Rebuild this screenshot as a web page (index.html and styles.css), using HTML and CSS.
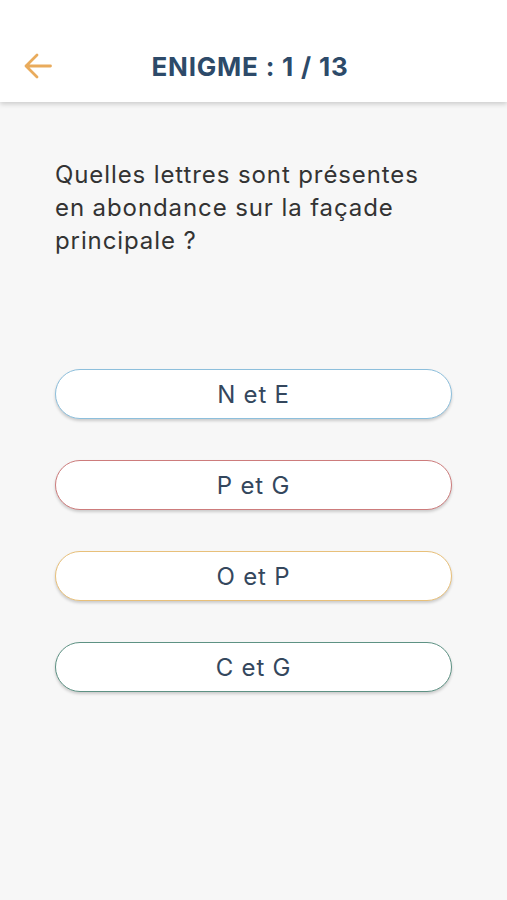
FILE: index.html
```html
<!DOCTYPE html>
<html lang="fr">
<head>
	<meta charset="UTF-8">
	<title>Enigme</title>
	<link rel="stylesheet" href="styles.css">
</head>
<body>
	<div class="header">
		<a class="back" href="javascript:;">
			<svg width="28" height="26" viewBox="0 0 28 26">
				<path d="M26.5 13H2M13 2L2 13l11 11" fill="none" stroke="#e9ab5c" stroke-width="2.8" stroke-linecap="round" stroke-linejoin="round"/>
			</svg>
		</a>
		<h1>ENIGME : 1 / 13</h1>
	</div>
	<div class="main">
		<p class="question">Quelles lettres sont présentes en abondance sur la façade principale ?</p>
		<ul class="answers">
			<li class="blue">N et E</li>
			<li class="red">P et G</li>
			<li class="orange">O et P</li>
			<li class="green">C et G</li>
		</ul>
	</div>
</body>
</html>
```

FILE: styles.css
```css
body,
h1,
p,
ul {
	margin: 0;
	padding: 0;
}

li {
	list-style: none;
}

body {
	background: #f7f7f7;
	font-family: Inter, "Liberation Sans", sans-serif;
	height: 900px;
}

.header {
	height: 72px;
	padding-top: 30px;
	background: #fff;
	box-shadow: 0 2px 5px rgba(0, 0, 0, 0.18);
	display: flex;
	align-items: center;
}

.header .back {
	display: block;
	width: 28px;
	height: 26px;
	margin-left: 24px;
}

.header h1 {
	flex: 1;
	text-align: center;
	font-size: 26px;
	font-weight: 700;
	color: #2d4a69;
	margin-right: 51px;
	margin-left: -8px;
	letter-spacing: 0.8px;
}

.main {
	padding: 56px 55px 0 55px;
}

.question {
	font-size: 24px;
	line-height: 33px;
	letter-spacing: 0.9px;
	color: #333;
	width: 380px;
}

.answers {
	margin-top: 112px;
	display: flex;
	flex-direction: column;
	gap: 41px;
}

.answers li {
	height: 48px;
	width: 395px;
	background: #fff;
	border: 1.5px solid #ccc;
	border-radius: 26px;
	box-shadow: 0 2px 3px rgba(0, 0, 0, 0.18);
	display: flex;
	align-items: center;
	justify-content: center;
	font-size: 24px;
	letter-spacing: 0.8px;
	color: #34475d;
}

.answers .blue {
	border-color: #8dbfdc;
}

.answers .red {
	border-color: #cd7c7c;
}

.answers .orange {
	border-color: #e8c07a;
}

.answers .green {
	border-color: #5e9284;
}
```
